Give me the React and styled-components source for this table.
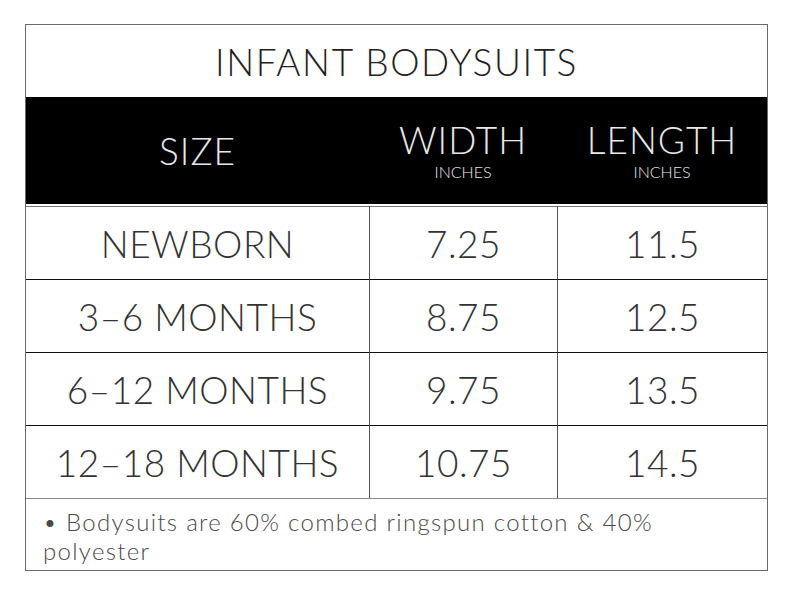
import React from 'react';
import styled, { createGlobalStyle } from 'styled-components';

const GlobalStyle = createGlobalStyle`
  body {
    margin: 0;
    background: #fff;
    font-family: 'Lato', 'Liberation Sans', sans-serif;
  }
`;

const Page = styled.div`
  width: 794px;
  height: 599px;
  padding: 24px 0 0 25px;
  box-sizing: border-box;
`;

const Chart = styled.div`
  width: 743px;
  border: 1px solid #6a6a6a;
  box-sizing: border-box;
`;

const Title = styled.div`
  height: 72px;
  display: flex;
  align-items: center;
  justify-content: center;
  font-size: 37px;
  font-weight: 300;
  color: #222;
  letter-spacing: 1.6px;
`;

const Grid = styled.div`
  display: grid;
  grid-template-columns: 343px 188px 1fr;
`;

const HeadCell = styled.div`
  height: 107px;
  background: #000;
  color: #e8e8e8;
  display: flex;
  flex-direction: column;
  align-items: center;
  justify-content: center;
  border-bottom: 2px solid #fff;
`;

const HeadLabel = styled.div`
  font-size: 37px;
  font-weight: 300;
  line-height: 40px;
  letter-spacing: 1px;
`;

const Unit = styled.div`
  font-size: 16px;
  font-weight: 300;
  line-height: 20px;
  margin-top: 2px;
`;

const Cell = styled.div`
  height: 73px;
  display: flex;
  align-items: center;
  justify-content: center;
  font-size: 37px;
  font-weight: 300;
  color: #333;
  letter-spacing: 0.5px;
  border-top: ${(p) => (p.$first ? '1px solid #777' : '1.5px solid #111')};
  border-left: ${(p) => (p.$col > 0 ? '1px solid #555' : 'none')};
  box-sizing: border-box;
`;

const Note = styled.div`
  border-top: 1px solid #888;
  height: 72px;
  box-sizing: border-box;
  padding: 8px 40px 0 17px;
  font-size: 24px;
  line-height: 29px;
  font-weight: 300;
  letter-spacing: 1.3px;
  color: #4a4a4a;
`;

const rows = [
  ['NEWBORN', '7.25', '11.5'],
  ['3–6 MONTHS', '8.75', '12.5'],
  ['6–12 MONTHS', '9.75', '13.5'],
  ['12–18 MONTHS', '10.75', '14.5'],
];

export default function App() {
  return (
    <Page>
      <GlobalStyle />
      <Chart>
        <Title>INFANT BODYSUITS</Title>
        <Grid>
          <HeadCell>
            <HeadLabel>SIZE</HeadLabel>
          </HeadCell>
          <HeadCell>
            <HeadLabel>WIDTH</HeadLabel>
            <Unit>INCHES</Unit>
          </HeadCell>
          <HeadCell>
            <HeadLabel>LENGTH</HeadLabel>
            <Unit>INCHES</Unit>
          </HeadCell>
          {rows.map((row, r) =>
            row.map((v, c) => (
              <Cell key={`${r}-${c}`} $first={r === 0} $col={c}>
                {v}
              </Cell>
            ))
          )}
        </Grid>
        <Note>
          • Bodysuits are 60% combed ringspun cotton &amp; 40% polyester
        </Note>
      </Chart>
    </Page>
  );
}
